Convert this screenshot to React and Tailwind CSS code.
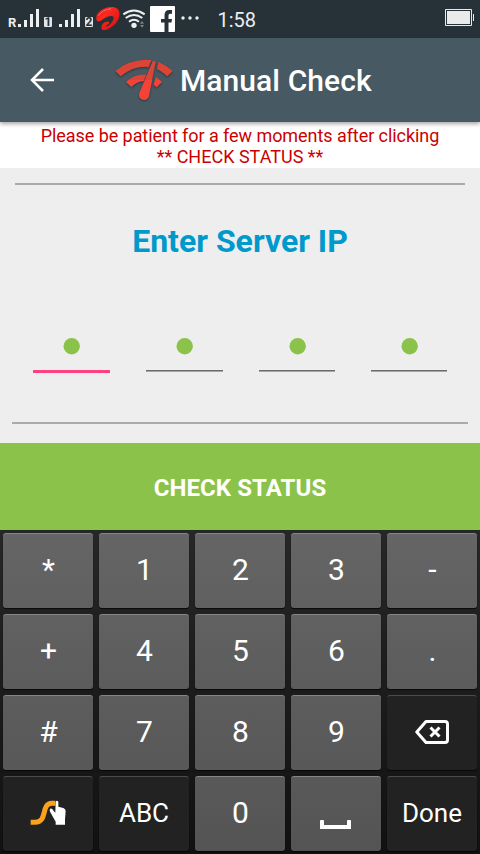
import React from 'react';

function Signal() {
  return (
    <svg className="block h-[19px] w-[22px] shrink-0" viewBox="0 0 22 19" fill="#eceff1">
      <path d="M0 15h3v3H0zM6 11h3v7H6zM12 5h3v13h-3zM18 0h3v18h-3z" />
    </svg>
  );
}

function SimBadge({ n }) {
  return (
    <span className="mt-[8px] ml-[4px] flex h-[10px] w-[8px] shrink-0 items-center justify-center rounded-[1px] bg-[#e2e5e6] text-[12px] leading-[10px] font-bold text-[#263238]">{n}</span>
  );
}

function StatusBar() {
  return (
    <div className="flex h-[38px] shrink-0 items-start bg-[#263238] pt-[9px] pl-[8px] text-[#eceff1]">
      <span className="mt-[6px] w-[10px] text-[13px] leading-[15px] font-bold">R</span>
      <Signal />
      <SimBadge n="1" />
      <span className="ml-[7px] flex"><Signal /></span>
      <SimBadge n="2" />
      <svg className="-mt-[3px] ml-[2px] block h-[26px] w-[26px] shrink-0" viewBox="285 18 78 78">
        <defs>
          <linearGradient id="swirl" x1="0" y1="0" x2="1" y2="1">
            <stop offset="0" stopColor="#c91212" />
            <stop offset=".35" stopColor="#fa2a22" />
            <stop offset="1" stopColor="#d40b0b" />
          </linearGradient>
        </defs>
        <path fill="url(#swirl)" d="M295 64C286 62 286 46 297 35C310 22 338 17 350 25C363 34 361 54 346 71C334 84 315 94 307 89C301 84 306 70 315 66C323 62 331 65 327 71C323 75 317 76 317 80C327 80 341 63 341 53C340 45 327 47 315 54C305 60 302 65 295 64Z" />
        <path d="M295 47Q306 30 333 26" fill="none" stroke="#ff8177" strokeWidth="2.500" />
      </svg>
      <svg className="ml-[1px] block h-[20px] w-[24px] shrink-0" viewBox="366 27 72 60" fill="none" stroke="#eceff1" strokeWidth="6">
        <path d="M370 43Q402 20 434 43M377 54Q402 36 427 54M387 65Q402 53 417 65" />
        <circle cx="402" cy="76" r="8" fill="#eceff1" stroke="none" />
        <path d="M420 71l6-8 6 8zM420 75h12l-6 8z" fill="#7c8589" stroke="none" />
      </svg>
      <svg className="-mt-[3px] ml-[4px] block h-[26px] w-[25px] shrink-0" viewBox="0 0 25 26">
        <rect width="25" height="26" rx="1" fill="#fff" />
        <path d="M14.500 26V16.500H11V13h3.500V9.500Q14.500 4 19 4H22V7.800H20Q18.500 7.800 18.500 9.500V13H22L21.500 16.500H18.500V26Z" fill="#263238" />
      </svg>
      <svg className="mt-[7px] ml-[6px] block h-[4px] w-[18px] shrink-0" viewBox="0 0 18 4" fill="#eceff1">
        <circle cx="2" cy="2" r="1.700" /><circle cx="9" cy="2" r="1.700" /><circle cx="16" cy="2" r="1.700" />
      </svg>
      <span className="ml-[18.500px] text-[20px] leading-[22px]">1:58</span>
      <svg className="mr-[6px] ml-auto block h-[17px] w-[29px] shrink-0" viewBox="0 0 29 17">
        <path d="M.5.500H26.500V16.500H.5Z" fill="none" stroke="#e9ebeb" />
        <path d="M2 2H25V15H2ZM28 5h1v7h-1z" fill="#e9ebeb" />
      </svg>
    </div>
  );
}

function SpeedLogo() {
  return (
    <svg className="block h-[48px] w-[64px] drop-shadow-[0_1px_1px_rgba(0,0,0,0.4)]" viewBox="336 60 192 144">
      <defs>
        <linearGradient id="gauge" gradientUnits="userSpaceOnUse" x1="0" y1="72" x2="0" y2="192">
          <stop offset="0" stopColor="#dc4437" />
          <stop offset=".49" stopColor="#dc4437" />
          <stop offset=".51" stopColor="#f44336" />
          <stop offset="1" stopColor="#f44336" />
        </linearGradient>
      </defs>
      <g fill="url(#gauge)">
        <path d="M346 105Q393 67 454 72L446 93Q401 89 362 121Z" />
        <path d="M475 78Q498 87 518 105L502 121Q488 108 471 99Z" />
        <path d="M378 138Q404 113 439 116L431 136Q411 136 394 153Z" />
        <path d="M467 123Q477 127 486 138L470 154L461 147Z" />
        <path d="M457 78Q462 71 467 78L447 180A15 15 0 0 1 417 173Z" />
      </g>
    </svg>
  );
}

function Backspace() {
  return (
    <svg className="block h-[24px] w-[34px]" viewBox="0 0 34 24" fill="none" stroke="#fff" strokeWidth="3" strokeLinejoin="round">
      <path d="M11 1.500H30Q32.500 1.500 32.500 4V20Q32.500 22.500 30 22.500H11L1.800 12Z" />
      <path d="M15.500 7.500L24.500 16.500M24.500 7.500L15.500 16.500" />
    </svg>
  );
}

function SwipeHand() {
  return (
    <svg className="block h-[26px] w-[36px]" viewBox="88 105 108 78">
      <path d="M90 172H103C143 172 119 115 154 115H164" fill="none" stroke="#faa21b" strokeWidth="15" />
      <path d="M165 110Q169 105 173 110V125L188 129Q195 132 195 139L193 163V179H165V170L149 142Q145 133 149 131Q154 129 159 138L164 143Z" fill="#fff" />
    </svg>
  );
}

function SpaceMark() {
  return (
    <svg className="mt-[23px] -ml-px block h-[9px] w-[31px]" viewBox="0 0 31 9" fill="#fff">
      <path d="M0 1Q0 0 1 0H3Q4 0 4 1V5H27V1Q27 0 28 0H30Q31 0 31 1V9H0Z" />
    </svg>
  );
}

const keys = [
  { t: '*' }, { t: '1' }, { t: '2' }, { t: '3' }, { t: '-' },
  { t: '+' }, { t: '4' }, { t: '5' }, { t: '6' }, { t: '.' },
  { t: '#' }, { t: '7' }, { t: '8' }, { t: '9' }, { icon: Backspace, dark: true },
  { icon: SwipeHand, dark: true }, { t: 'ABC', dark: true }, { t: '0' }, { icon: SpaceMark }, { t: 'Done', dark: true },
];

const rowShade = [
  'bg-linear-to-b from-[#656565] to-[#606060]',
  'bg-linear-to-b from-[#616161] to-[#5c5c5c]',
  'bg-linear-to-b from-[#5d5d5d] to-[#585858]',
  'bg-linear-to-b from-[#595959] to-[#545454]',
];

function Key({ item, row }) {
  const Icon = item.icon;
  const tone = item.dark ? 'bg-[#222222] border-[#4b4b4b]' : `${rowShade[row]} border-[#868686]`;
  const size = item.dark ? 'text-[26px] pb-[2px]' : Icon ? 'pb-[2px]' : 'text-[30px] pl-[1px] pb-[4px]';
  return (
    <button className={`flex h-[75px] items-center justify-center rounded-[3px] border-t text-white shadow-[0_1px_1px_rgba(0,0,0,0.7)] ${tone} ${size}`}>
      {Icon ? <Icon /> : item.t}
    </button>
  );
}

export default function App() {
  return (
    <div className="flex h-[854px] w-[480px] flex-col overflow-hidden bg-[#eeeeee] font-['Roboto',sans-serif]">
      <StatusBar />
      <header className="z-10 flex h-[84px] shrink-0 items-center bg-[#475963] shadow-[0_2px_4px_rgba(0,0,0,0.35)]">
        <svg className="ml-[30px] block h-[24px] w-[24px]" viewBox="0 0 24 24" fill="none" stroke="#fff" strokeWidth="2.500">
          <path d="M24 12H2M13 1L2 12L13 23" />
        </svg>
        <div className="ml-[58px]"><SpeedLogo /></div>
        <h1 className="mt-[2px] ml-[4px] text-[30px] leading-[36px] font-medium tracking-[0.08px] whitespace-nowrap text-white">Manual Check</h1>
      </header>
      <p className="h-[46px] shrink-0 bg-white pt-[3px] text-center text-[18px] leading-[21px] text-[#cc0000]">
        <span className="tracking-[-0.06px]">Please be patient for a few moments after clicking</span><br /><span>** CHECK STATUS **</span>
      </p>
      <main className="flex h-[275px] shrink-0 flex-col pt-[15px]">
        <div className="mx-[15px] h-[2px] bg-[#aaaaaa]" />
        <h2 className="mt-[37px] text-center text-[32px] leading-[38px] font-bold text-[#0099cc]">Enter Server IP</h2>
        <div className="mt-[78px] flex h-[35px] justify-between px-[33px]">
          {[77, 77, 76, 76].map((w, i) => (
            <div key={i} className="flex flex-col items-center" style={{ width: w }}>
              <svg className="block h-[17px] w-[17px]" viewBox="0 0 17 17" fill="#8bc34a">
                <circle cx="8.700" cy="8.300" r="8.200" />
              </svg>
              {i === 0 ? (
                <span className="mt-[15px] h-[3px] w-full bg-[#ff4081]" />
              ) : (
                <span className="mt-[15px] h-[2px] w-full border-t border-[#6c6c6c] bg-[#a5a5a5]" />
              )}
            </div>
          ))}
        </div>
        <div className="mx-[12px] mt-[49px] h-[2px] bg-[#aaaaaa]" />
      </main>
      <button className="h-[87px] shrink-0 bg-[#8bc34a] pt-[3px] text-[24px] font-bold tracking-[0.08px] text-white">CHECK STATUS</button>
      <section className="grid h-[324px] shrink-0 grid-cols-5 content-start gap-[6px] bg-linear-to-b from-[#272727] to-[#111111] p-[3px]">
        {keys.map((item, i) => <Key key={i} item={item} row={Math.floor(i / 5)} />)}
      </section>
    </div>
  );
}
